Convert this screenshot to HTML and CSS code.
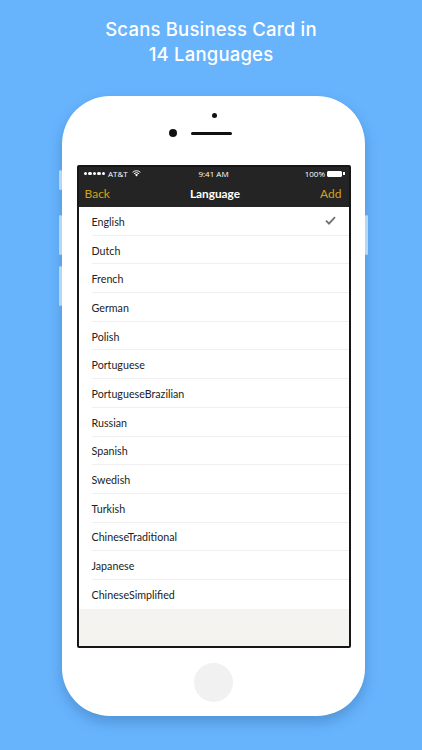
FILE: index.html
```html
<!DOCTYPE html>
<html>
<head>
<meta charset="utf-8">
<link rel="stylesheet" href="styles.css">
</head>
<body>
<div class="page">
  <h1 class="title">Scans Business Card in<br>14 Languages</h1>
  <div class="phone">
    <span class="btn btn-mute"></span>
    <span class="btn btn-vol1"></span>
    <span class="btn btn-vol2"></span>
    <span class="btn btn-power"></span>
    <div class="top">
      <span class="sensor"></span>
      <div class="cam-row">
        <span class="camera"></span>
        <span class="speaker"></span>
      </div>
    </div>
    <div class="screen">
      <div class="status">
        <div class="st-left">
          <span class="dots"><i></i><i></i><i></i><i></i><i></i></span>
          <span>AT&amp;T</span>
          <svg class="wifi" width="9" height="7" viewBox="0 0 12 9"><path d="M6 8.5 L8 6.2 A3 3 0 0 0 4 6.2 Z" fill="#fff"/><path d="M2.6 4.8 A5 5 0 0 1 9.4 4.8" stroke="#fff" stroke-width="1.3" fill="none"/><path d="M0.8 2.9 A7.6 7.6 0 0 1 11.2 2.9" stroke="#fff" stroke-width="1.3" fill="none"/></svg>
        </div>
        <div class="st-center">9:41 AM</div>
        <div class="st-right">
          <span>100%</span>
          <span class="battery"><span class="bat-fill"></span></span><span class="bat-tip"></span>
        </div>
      </div>
      <div class="nav">
        <span class="nav-btn">Back</span>
        <span class="nav-title">Language</span>
        <span class="nav-btn">Add</span>
      </div>
      <ul class="list">
        <li class="row"><span>English</span><svg class="check" width="11" height="9" viewBox="0 0 11 9"><path d="M1 4.6 L4 7.6 L10 1.2" stroke="#707070" stroke-width="1.8" fill="none"/></svg></li>
        <li class="row"><span>Dutch</span></li>
        <li class="row"><span>French</span></li>
        <li class="row"><span>German</span></li>
        <li class="row"><span>Polish</span></li>
        <li class="row"><span>Portuguese</span></li>
        <li class="row"><span>PortugueseBrazilian</span></li>
        <li class="row"><span>Russian</span></li>
        <li class="row"><span>Spanish</span></li>
        <li class="row"><span>Swedish</span></li>
        <li class="row"><span>Turkish</span></li>
        <li class="row"><span>ChineseTraditional</span></li>
        <li class="row"><span>Japanese</span></li>
        <li class="row last"><span>ChineseSimplified</span></li>
      </ul>
      <div class="filler"></div>
    </div>
    <div class="bottom">
      <span class="home"></span>
    </div>
  </div>
</div>
</body>
</html>
```
FILE: styles.css
```css
* { box-sizing: border-box; }
html, body { margin: 0; padding: 0; }
body {
  background: #67b4fd;
  width: 422px;
  height: 750px;
  overflow: hidden;
  font-family: Lato, "Open Sans", sans-serif;
}
.page {
  display: flex;
  flex-direction: column;
  align-items: flex-start;
}
.title {
  margin: 17px 0 0 0;
  width: 422px;
  text-align: center;
  color: #fff;
  font-family: Inter, "Open Sans", sans-serif;
  font-weight: 500;
  font-size: 18.5px;
  line-height: 25px;
  letter-spacing: 0.2px;
}
.phone {
  position: relative;
  margin: 29px 0 0 62px;
  width: 303px;
  height: 620px;
  background: #fff;
  border-radius: 48px;
  box-shadow: 0 6px 14px rgba(20, 60, 110, 0.28);
  display: flex;
  flex-direction: column;
  align-items: center;
}
.btn {
  position: absolute;
  background: rgba(255, 255, 255, 0.55);
  width: 3px;
  border-radius: 1.5px;
}
.btn-mute { left: -3px; top: 74px; height: 20px; }
.btn-vol1 { left: -3px; top: 119px; height: 40px; }
.btn-vol2 { left: -3px; top: 170px; height: 40px; }
.btn-power { right: -3px; top: 119px; height: 40px; }
.top {
  height: 69px;
  width: 100%;
  display: flex;
  flex-direction: column;
  align-items: center;
}
.sensor {
  margin: 17px 0 0 2px;
  width: 5px;
  height: 5px;
  border-radius: 50%;
  background: #111;
}
.cam-row {
  margin-top: 11px;
  display: flex;
  align-items: center;
  gap: 14px;
  margin-left: -26px;
}
.camera {
  width: 8px;
  height: 8px;
  border-radius: 50%;
  background: #111;
}
.speaker {
  width: 41px;
  height: 3px;
  border-radius: 2px;
  background: #111;
}
.screen {
  width: 274px;
  height: 483px;
  border: 2px solid #161616;
  border-radius: 2px;
  display: flex;
  flex-direction: column;
  background: #fff;
  overflow: hidden;
}
.status {
  height: 15px;
  background: #242424;
  color: #fff;
  font-family: "Open Sans", sans-serif;
  font-size: 8px;
  display: flex;
  align-items: center;
  justify-content: space-between;
  padding: 0 4px 2px 5px;
  position: relative;
}
.st-left { display: flex; align-items: center; gap: 3px; }
.dots { display: flex; gap: 1px; }
.dots i {
  width: 3.5px; height: 3.5px; border-radius: 50%; background: #fff; display: block;
}
.wifi { margin-left: 1px; }
.st-center {
  position: absolute;
  left: 0; right: 0;
  top: 1px;
  text-align: center;
}
.st-right { display: flex; align-items: center; gap: 2px; }
.battery {
  width: 15px; height: 6px; border: 1px solid #fff; border-radius: 1px; display: block; padding: 0;
}
.bat-fill { display: block; width: 100%; height: 100%; background: #fff; }
.bat-tip { width: 1.5px; height: 3px; background: #fff; display: block; margin-left: -1px; }
.nav {
  height: 25px;
  background: #242424;
  display: flex;
  align-items: center;
  justify-content: space-between;
  padding: 0 7px 2px 6px;
  font-family: Lato, sans-serif;
  font-size: 12px;
}
.nav-btn { color: #d4a21a; }
.nav-title { color: #fff; font-weight: 700; font-size: 11.8px; }
.list {
  list-style: none;
  margin: 0;
  padding: 0 0 0 13px;
  background: #fff;
}
.row {
  height: 28.7px;
  display: flex;
  align-items: center;
  justify-content: space-between;
  padding: 1px 13px 0 0;
  font-size: 10.7px;
  color: #222;
  border-bottom: 1px solid #efefef;
}
.row.last { border-bottom: none; }
.check { margin-top: -2px; }
.filler {
  flex: 1;
  background: #f4f3f0;
}
.bottom {
  flex: 1;
  display: flex;
  align-items: center;
  justify-content: center;
}
.home {
  width: 39px;
  height: 39px;
  border-radius: 50%;
  background: #f1f1f1;
  margin-top: 1px;
}
```
